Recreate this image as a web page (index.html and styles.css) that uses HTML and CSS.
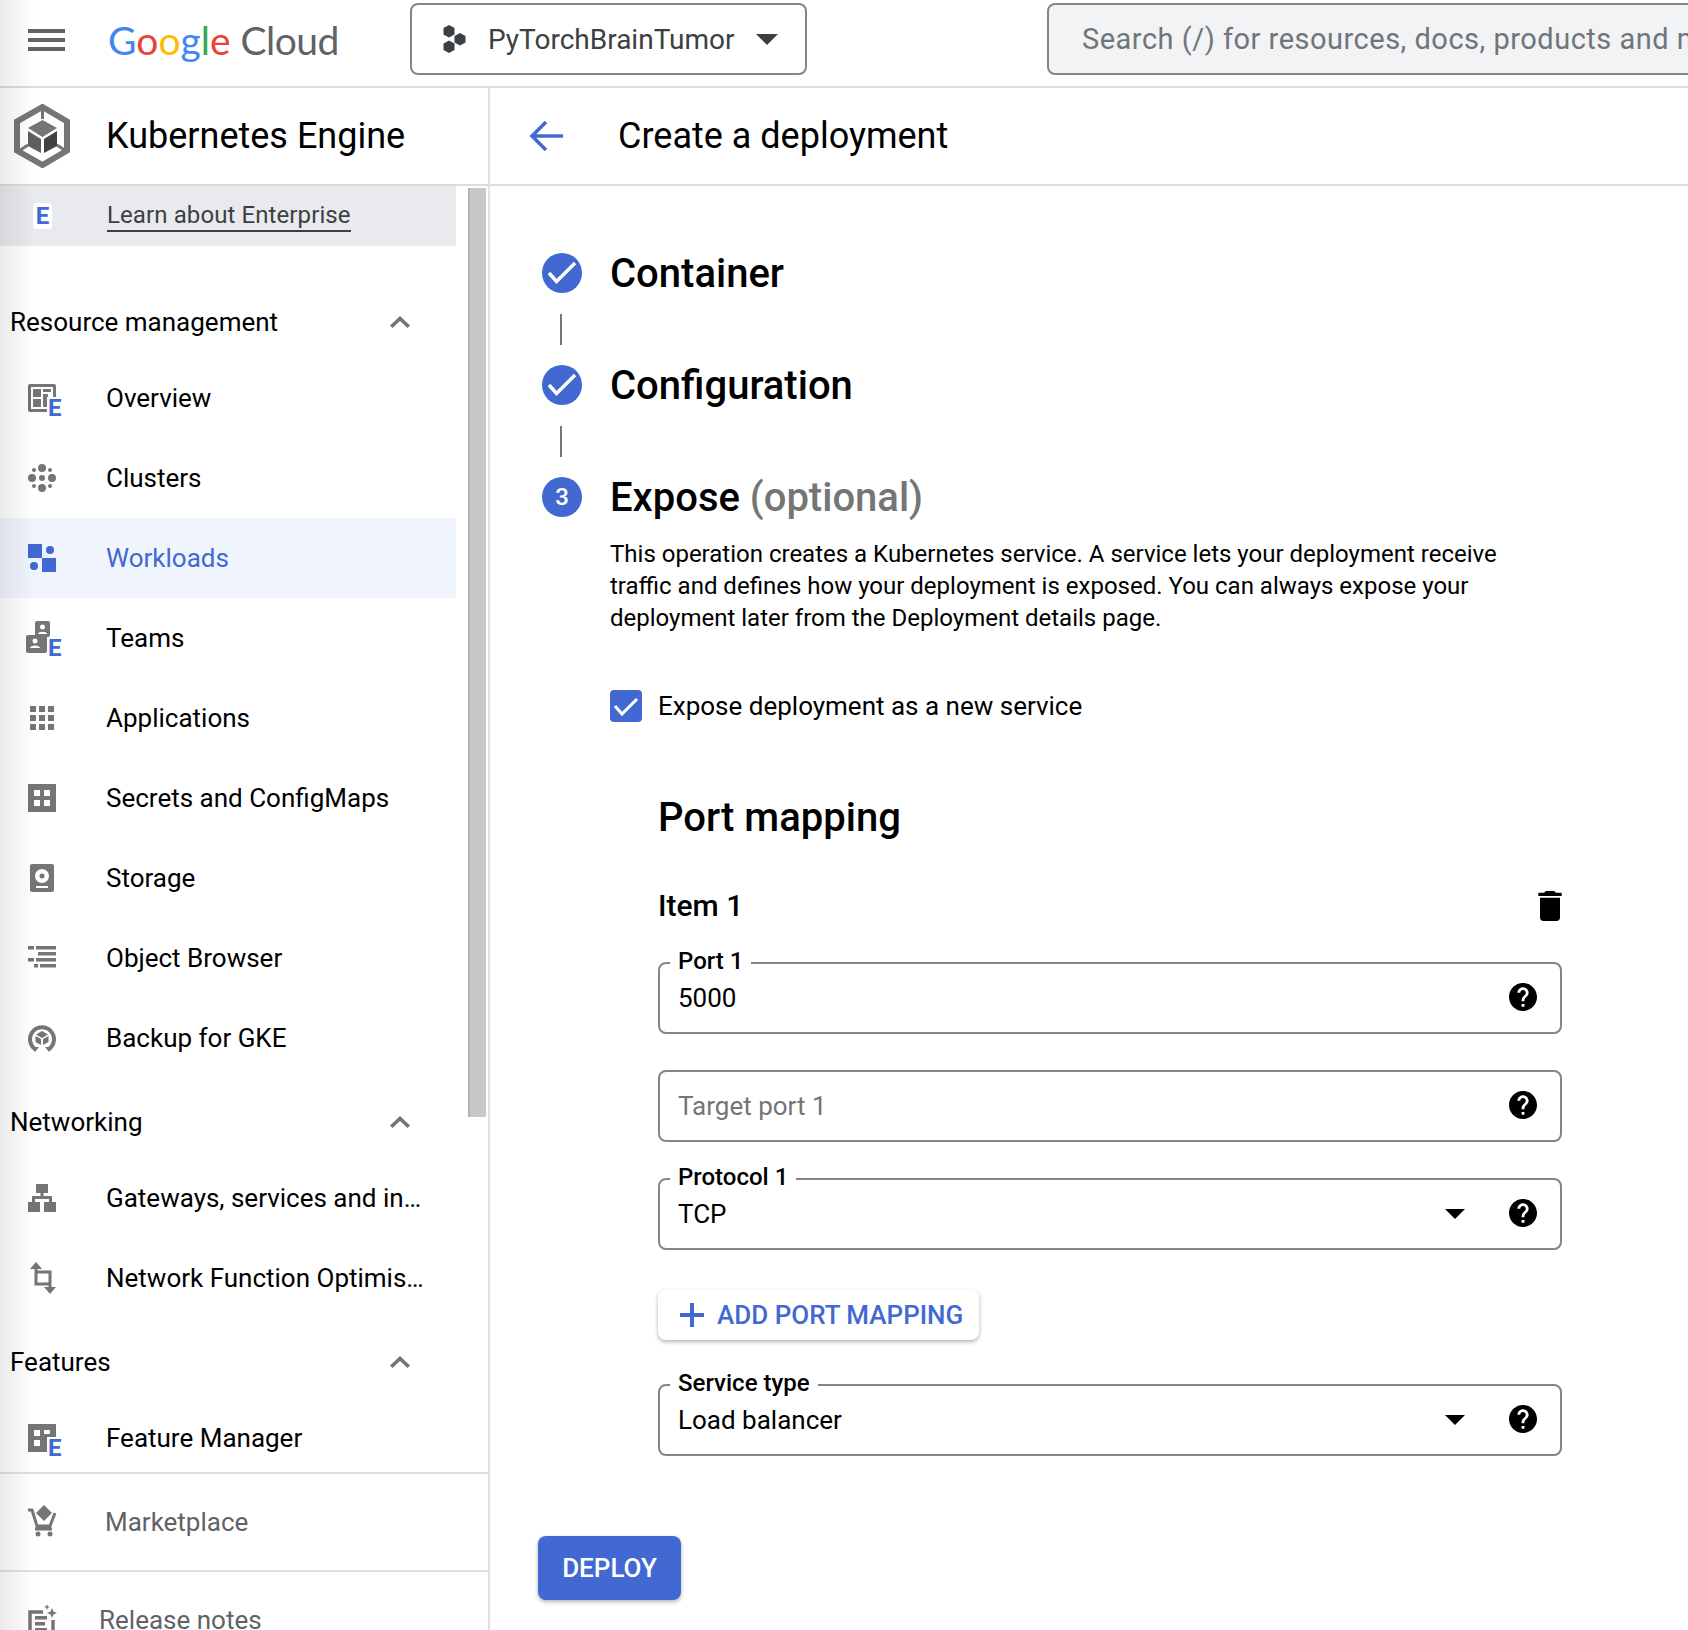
FILE: index.html
```html
<!DOCTYPE html>
<html lang="en">
<head>
    <meta charset="UTF-8">
    <meta name="viewport" content="width=device-width, initial-scale=1.0">
    <title>Create a deployment</title>
    <link rel="stylesheet" href="styles.css">
</head>
<body>

<!-- Top bar -->
<header class="topbar">
    <svg class="menu-icon" viewBox="0 0 37 22"><path d="M0 0h37v4H0zM0 9h37v4H0zM0 18h37v4H0z"/></svg>
    <div class="logo">
        <span class="g-blue">G</span><span class="g-red">o</span><span class="g-yellow">o</span><span class="g-blue">g</span><span class="g-green">l</span><span class="g-red">e</span>
        <span class="logo-cloud">Cloud</span>
    </div>
    <div class="project">
        <svg class="project-icon" viewBox="0 0 27 28"><path d="M8 0l5.500 3v6.500L8 12.500 2.500 9.500V3zM19 8l5.500 3v6.500L19 20.500l-5.500-3V11zM8 15.500l5.500 3V25L8 28l-5.500-3v-6.500z"/></svg>
        <span class="project-name">PyTorchBrainTumor</span>
        <span class="project-caret"></span>
    </div>
    <div class="search">Search (/) for resources, docs, products and more</div>
</header>

<div class="layout">
    <!-- Sidebar -->
    <aside class="sidebar">
        <div class="sidebar-title">
            <svg class="gke-logo" viewBox="0 0 56 64">
                <path d="M28.500 3L53 17.500V46.500L28.500 61 3 46.500V17.500z" fill="none" stroke="#757575" stroke-width="6"/>
                <path d="M28.500 4v11M5 47l9-6M52 47l-9-6" fill="none" stroke="#757575" stroke-width="3"/>
                <path d="M28.500 16L43 24l-14.500 9L14 24z" fill="#757575"/>
                <path d="M14 27l13 8v14l-13-7z" fill="#5f5f5f"/>
                <path d="M43 27l-13 8v14l13-7z" fill="#424242"/>
            </svg>
            <span>Kubernetes Engine</span>
        </div>

        <div class="nav-scroll">
            <nav class="nav-list">
                <a class="enterprise-row">
                    <span class="e-badge">E</span>
                    <span class="enterprise-link">Learn about Enterprise</span>
                </a>

                <div class="nav-head nav-head-first">
                    <span>Resource management</span>
                    <svg class="chevron" viewBox="0 0 20 12"><path d="M10 0l10 9.500-2.500 2.500L10 5 2.500 12 0 9.500z"/></svg>
                </div>
                <a class="nav-row">
                    <svg class="nav-icon" viewBox="0 0 28 28">
                        <rect width="28" height="28" rx="2"/>
                        <path fill="#fff" d="M3 3h22v22H3z"/>
                        <path d="M5 5h8v8H5zM15 5h8v3h-8zM5 15h8v8H5zM15 10h5v13h-5z"/>
                        <rect class="e-back" x="19" y="13" width="14" height="20"/>
                        <text class="e-mark" x="20" y="32">E</text>
                    </svg>
                    <span>Overview</span>
                </a>
                <a class="nav-row">
                    <svg class="nav-icon" viewBox="0 0 28 28">
                        <circle cx="14" cy="4" r="4"/><circle cx="14" cy="24" r="4"/><circle cx="4" cy="14" r="4"/><circle cx="24" cy="14" r="4"/>
                        <circle cx="14" cy="14" r="3"/><circle cx="6" cy="6" r="2"/><circle cx="22" cy="6" r="2"/><circle cx="6" cy="22" r="2"/><circle cx="22" cy="22" r="2"/>
                    </svg>
                    <span>Clusters</span>
                </a>
                <a class="nav-row nav-row-active">
                    <svg class="nav-icon" viewBox="0 0 28 28">
                        <path d="M0 0h14v14H0zM14 14h14v14H14z"/><circle cx="22" cy="6" r="4"/><circle cx="6" cy="22" r="4"/>
                    </svg>
                    <span>Workloads</span>
                </a>
                <a class="nav-row">
                    <svg class="nav-icon" viewBox="0 0 28 28">
                        <rect x="7" y="-3" width="15" height="16" rx="2"/>
                        <rect x="-2" y="11" width="21" height="18" rx="2"/>
                        <circle cx="14.500" cy="3" r="2.500" fill="#fff"/><path fill="#fff" d="M10 10c0-3 9-3 9 0z"/>
                        <circle cx="7" cy="17" r="2.500" fill="#fff"/><path fill="#fff" d="M2 24c0-3.500 10-3.500 10 0z"/>
                        <rect class="e-back" x="19" y="13" width="14" height="20"/>
                        <text class="e-mark" x="20" y="32">E</text>
                    </svg>
                    <span>Teams</span>
                </a>
                <a class="nav-row">
                    <svg class="nav-icon" viewBox="0 0 28 28">
                        <path d="M2 2h6v6H2zM11 2h6v6h-6zM20 2h6v6h-6zM2 11h6v6H2zM11 11h6v6h-6zM20 11h6v6h-6zM2 20h6v6H2zM11 20h6v6h-6zM20 20h6v6h-6z"/>
                    </svg>
                    <span>Applications</span>
                </a>
                <a class="nav-row">
                    <svg class="nav-icon" viewBox="0 0 28 28">
                        <path fill-rule="evenodd" d="M0 0h28v28H0zM6 6v6h6V6zM16 6v6h6V6zM6 16v6h6v-6zM16 16v6h6v-6z"/>
                    </svg>
                    <span>Secrets and ConfigMaps</span>
                </a>
                <a class="nav-row">
                    <svg class="nav-icon" viewBox="0 0 28 28">
                        <rect x="2" width="24" height="28" rx="2"/>
                        <circle cx="14" cy="12" r="7" fill="#fff"/><circle cx="14" cy="12" r="2.500"/>
                        <path fill="#fff" d="M8 22h12v2H8z"/>
                    </svg>
                    <span>Storage</span>
                </a>
                <a class="nav-row">
                    <svg class="nav-icon" viewBox="0 0 28 28">
                        <path d="M0 2h6v3.500H0zM8 2h20v3.500H8zM10 8h18v3.500H10zM0 14h6v3.500H0zM8 14h20v3.500H8zM6 20h4v3.500H6zM12 20h16v3.500H12z"/>
                    </svg>
                    <span>Object Browser</span>
                </a>
                <a class="nav-row">
                    <svg class="nav-icon" viewBox="0 0 28 28">
                        <path fill="none" stroke="#757575" stroke-width="4" d="M7 25A12 12 0 1 1 21 25"/>
                        <path d="M3 23h8l-4 5zM25 23h-8l4 5z"/>
                        <path d="M14 7l6 3.500-6 3.500-6-3.500zM7.500 12l5.500 3v6l-5.500-3zM20.500 12L15 15v6l5.500-3z"/>
                    </svg>
                    <span>Backup for GKE</span>
                </a>

                <div class="nav-head">
                    <span>Networking</span>
                    <svg class="chevron" viewBox="0 0 20 12"><path d="M10 0l10 9.500-2.500 2.500L10 5 2.500 12 0 9.500z"/></svg>
                </div>
                <a class="nav-row">
                    <svg class="nav-icon" viewBox="0 0 28 28">
                        <path d="M8 0h12v9h-4.500v3H24v6h4v10H16V18h5v-3H7v3h5v10H0V18h4v-6h8.500V9H8z"/>
                    </svg>
                    <span>Gateways, services and in…</span>
                </a>
                <a class="nav-row">
                    <svg class="nav-icon" viewBox="0 0 28 28">
                        <path fill="none" stroke="#757575" stroke-width="3" d="M8 3v17h14M8 8h14v15"/>
                        <path d="M8-2l6 7H2zM22 30l-6-7h12z"/>
                    </svg>
                    <span>Network Function Optimis…</span>
                </a>

                <div class="nav-head">
                    <span>Features</span>
                    <svg class="chevron" viewBox="0 0 20 12"><path d="M10 0l10 9.500-2.500 2.500L10 5 2.500 12 0 9.500z"/></svg>
                </div>
                <a class="nav-row">
                    <svg class="nav-icon" viewBox="0 0 28 28">
                        <path fill-rule="evenodd" d="M0 0h28v28H0zM6 6v6h6V6zM16 6v4h6V6zM6 16v6h6v-6z"/>
                        <rect class="e-back" x="19" y="13" width="14" height="20"/>
                        <text class="e-mark" x="20" y="32">E</text>
                    </svg>
                    <span>Feature Manager</span>
                </a>
            </nav>
            <div class="scrollbar"></div>
        </div>

        <a class="foot-row">
            <svg class="nav-icon" viewBox="0 0 28 28">
                <path d="M16-3l8 8-8 8-8-8z"/>
                <path fill="none" stroke="#757575" stroke-width="3" d="M0 2h4l5 16h13l5-13M7 21h17"/>
                <circle cx="10" cy="26" r="2.500"/><circle cx="22" cy="26" r="2.500"/>
            </svg>
            <span>Marketplace</span>
        </a>
        <a class="foot-row foot-row-last">
            <svg class="nav-icon" viewBox="0 0 28 28">
                <path fill="none" stroke="#757575" stroke-width="3.500" d="M15 6H2v24M25 14v16"/>
                <path d="M7 10h12v3.500H7zM7 16h10v3.500H7zM7 22h12v3.500H7z"/>
                <path d="M24 2l1.500 3.500L29 7l-3.500 1.500L24 12l-1.500-3.500L19 7l3.500-1.500zM19-2l.8 2.200L22 1l-2.200.8L19 4l-.8-2.200L16 1l2.200-.8z"/>
            </svg>
            <span>Release notes</span>
        </a>
    </aside>

    <!-- Main panel -->
    <main class="main">
        <div class="page-title">
            <svg class="back-icon" viewBox="0 0 34 30"><path fill="none" stroke="#4169d1" stroke-width="3.500" d="M34 15H3M17 1L3 15l14 14"/></svg>
            <h1>Create a deployment</h1>
        </div>

        <div class="content">
            <div class="step">
                <span class="step-dot"><svg viewBox="0 0 40 40"><path fill="none" stroke="#fff" stroke-width="3.500" d="M7 20l7.500 8.500L33 10"/></svg></span>
                <h2>Container</h2>
            </div>
            <div class="step-line"></div>
            <div class="step">
                <span class="step-dot"><svg viewBox="0 0 40 40"><path fill="none" stroke="#fff" stroke-width="3.500" d="M7 20l7.500 8.500L33 10"/></svg></span>
                <h2>Configuration</h2>
            </div>
            <div class="step-line"></div>
            <div class="step">
                <span class="step-dot">3</span>
                <h2>Expose <span class="optional">(optional)</span></h2>
            </div>

            <div class="step-body">
                <p class="description">
                    This operation creates a Kubernetes service. A service lets your deployment receive<br>
                    traffic and defines how your deployment is exposed. You can always expose your<br>
                    deployment later from the Deployment details page.
                </p>

                <label class="check-row">
                    <span class="checkbox"><svg viewBox="0 0 32 32"><path fill="none" stroke="#fff" stroke-width="3" d="M5 16l7 8L27 9"/></svg></span>
                    Expose deployment as a new service
                </label>

                <div class="port-form">
                    <h3>Port mapping</h3>
                    <div class="item-head">
                        <h4>Item 1</h4>
                        <svg class="trash" viewBox="5 3 14 18"><path d="M6 19c0 1.100.9 2 2 2h8c1.100 0 2-.9 2-2V7H6v12zM19 4h-3.500l-1-1h-5l-1 1H5v2h14V4z"/></svg>
                    </div>

                    <div class="field">
                        <span class="field-label">Port 1</span>
                        <span class="field-value">5000</span>
                        <svg class="help" viewBox="2 2 20 20"><path d="M12 2C6.480 2 2 6.480 2 12s4.480 10 10 10 10-4.480 10-10S17.520 2 12 2zm1 17h-2v-2h2v2zm2.070-7.750l-.9.920C13.450 12.900 13 13.500 13 15h-2v-.5c0-1.100.45-2.100 1.170-2.830l1.240-1.260c.37-.36.59-.86.59-1.410 0-1.100-.9-2-2-2s-2 .9-2 2H8c0-2.210 1.790-4 4-4s4 1.790 4 4c0 .88-.36 1.680-.93 2.250z"/></svg>
                    </div>
                    <div class="field">
                        <span class="field-value field-placeholder">Target port 1</span>
                        <svg class="help" viewBox="2 2 20 20"><path d="M12 2C6.480 2 2 6.480 2 12s4.480 10 10 10 10-4.480 10-10S17.520 2 12 2zm1 17h-2v-2h2v2zm2.070-7.750l-.9.920C13.450 12.900 13 13.500 13 15h-2v-.5c0-1.100.45-2.100 1.170-2.830l1.240-1.260c.37-.36.59-.86.59-1.410 0-1.100-.9-2-2-2s-2 .9-2 2H8c0-2.210 1.790-4 4-4s4 1.790 4 4c0 .88-.36 1.680-.93 2.250z"/></svg>
                    </div>
                    <div class="field">
                        <span class="field-label">Protocol 1</span>
                        <span class="field-value">TCP</span>
                        <span class="field-caret"></span>
                        <svg class="help" viewBox="2 2 20 20"><path d="M12 2C6.480 2 2 6.480 2 12s4.480 10 10 10 10-4.480 10-10S17.520 2 12 2zm1 17h-2v-2h2v2zm2.070-7.750l-.9.920C13.450 12.900 13 13.500 13 15h-2v-.5c0-1.100.45-2.100 1.170-2.830l1.240-1.260c.37-.36.59-.86.59-1.410 0-1.100-.9-2-2-2s-2 .9-2 2H8c0-2.210 1.790-4 4-4s4 1.790 4 4c0 .88-.36 1.680-.93 2.250z"/></svg>
                    </div>

                    <button class="add-btn">
                        <svg viewBox="0 0 24 24"><path d="M10 0h4v10h10v4H14v10h-4V14H0v-4h10z"/></svg>
                        ADD PORT MAPPING
                    </button>

                    <div class="field field-service">
                        <span class="field-label">Service type</span>
                        <span class="field-value">Load balancer</span>
                        <span class="field-caret"></span>
                        <svg class="help" viewBox="2 2 20 20"><path d="M12 2C6.480 2 2 6.480 2 12s4.480 10 10 10 10-4.480 10-10S17.520 2 12 2zm1 17h-2v-2h2v2zm2.070-7.750l-.9.920C13.450 12.900 13 13.500 13 15h-2v-.5c0-1.100.45-2.100 1.170-2.830l1.240-1.260c.37-.36.59-.86.59-1.410 0-1.100-.9-2-2-2s-2 .9-2 2H8c0-2.210 1.790-4 4-4s4 1.790 4 4c0 .88-.36 1.680-.93 2.250z"/></svg>
                    </div>
                </div>
            </div>

            <button class="deploy-btn">DEPLOY</button>
        </div>
    </main>
</div>

</body>
</html>
```

FILE: styles.css
```css
* {
    box-sizing: border-box;
}
html, body {
    height: 1630px;
    overflow: hidden;
}
body {
    margin: 0;
    font-family: Roboto, "Liberation Sans", sans-serif;
    font-size: 26px;
    color: #000;
    background: #fff;
    position: relative;
}
/* soft shadow down the left edge of the page */
body::before {
    content: "";
    position: absolute;
    left: 0;
    top: 0;
    bottom: 0;
    width: 36px;
    background: linear-gradient(90deg, rgba(0, 0, 0, 0.08), rgba(0, 0, 0, 0));
    z-index: 5;
}

/* Top bar */
.topbar {
    height: 88px;
    display: flex;
    align-items: center;
    border-bottom: 2px solid #dadce0;
    overflow: hidden;
}
.menu-icon {
    width: 37px;
    height: 22px;
    margin-left: 28px;
    margin-bottom: 6px;
    fill: #5f6368;
    flex: none;
}
.logo {
    width: 302px;
    margin-left: 43px;
    margin-bottom: 6px;
    font-family: Lato, Roboto, sans-serif;
    font-size: 39px;
    flex: none;
}
.g-blue { color: #4285f4; }
.g-red { color: #ea4335; }
.g-yellow { color: #fbbc04; }
.g-green { color: #34a853; }
.logo-cloud {
    color: #5f6368;
    letter-spacing: -0.5px;
}
.project {
    width: 397px;
    height: 72px;
    margin-bottom: 8px;
    padding-left: 29px;
    display: flex;
    align-items: center;
    border: 2px solid #80868b;
    border-radius: 8px;
    flex: none;
}
.project-icon {
    width: 27px;
    height: 28px;
    fill: #3c4043;
}
.project-name {
    margin-left: 20px;
    font-size: 28px;
    color: #3c4043;
}
.project-caret {
    margin-left: 21px;
    border-left: 11px solid transparent;
    border-right: 11px solid transparent;
    border-top: 11px solid #3c4043;
}
.search {
    width: 800px;
    height: 72px;
    margin-left: 240px;
    margin-bottom: 8px;
    padding-left: 33px;
    display: flex;
    align-items: center;
    flex: none;
    font-size: 29px;
    letter-spacing: 0.5px;
    color: #70757a;
    white-space: nowrap;
    background: #f1f3f4;
    border: 2px solid #80868b;
    border-radius: 8px;
}

.layout {
    display: flex;
    height: 1542px;
}

/* Sidebar */
.sidebar {
    width: 490px;
    flex: none;
    border-right: 2px solid #e0e0e0;
    display: flex;
    flex-direction: column;
}
.sidebar-title {
    height: 98px;
    flex: none;
    display: flex;
    align-items: center;
    border-bottom: 2px solid #dadce0;
    font-size: 36px;
}
.gke-logo {
    width: 56px;
    height: 64px;
    margin-left: 14px;
    margin-right: 36px;
}
.nav-scroll {
    height: 1288px;
    flex: none;
    display: flex;
    overflow: hidden;
    border-bottom: 2px solid #e0e0e0;
}
.nav-list {
    width: 456px;
    flex: none;
}
.scrollbar {
    width: 18px;
    height: 929px;
    margin: 2px 0 0 12px;
    background: #c8c8c8;
    border-left: 2px solid #b4b4b4;
    flex: none;
}
.enterprise-row {
    height: 60px;
    display: flex;
    align-items: center;
    background: #e8eaed;
    color: #3c4043;
}
.e-badge {
    width: 19px;
    height: 26px;
    margin-left: 33px;
    margin-right: 55px;
    display: flex;
    align-items: center;
    justify-content: center;
    background: #fff;
    border-radius: 3px;
    color: #4169d1;
    font-size: 24px;
    font-weight: 700;
}
.enterprise-link {
    border-bottom: 2px solid #3c4043;
    font-size: 24px;
    letter-spacing: 0.1px;
    line-height: 30px;
}
.nav-head {
    height: 72px;
    margin-top: 8px;
    padding: 0 46px 0 10px;
    display: flex;
    align-items: center;
    justify-content: space-between;
}
.nav-head-first {
    margin-top: 40px;
}
.chevron {
    width: 20px;
    height: 12px;
    fill: #757575;
}
.nav-row {
    height: 80px;
    display: flex;
    align-items: center;
}
.nav-row-active {
    background: #f0f4fd;
    color: #4169d1;
}
.nav-row-active .nav-icon {
    fill: #4169d1;
}
.nav-icon {
    width: 28px;
    height: 28px;
    margin-left: 28px;
    margin-right: 50px;
    fill: #757575;
    overflow: visible;
    flex: none;
}
.e-back {
    fill: #fff;
}
.e-mark {
    fill: #4169d1;
    font-family: Roboto, sans-serif;
    font-size: 24px;
    font-weight: 700;
}
.foot-row {
    height: 98px;
    flex: none;
    display: flex;
    align-items: center;
    color: #5f6368;
    border-bottom: 2px solid #e0e0e0;
}
.foot-row .nav-icon {
    margin-right: 49px;
}
.foot-row-last {
    height: 92px;
    padding-top: 4px;
    border-bottom: none;
}
.foot-row-last .nav-icon {
    margin-right: 43px;
}

/* Main panel */
.main {
    flex: 1;
    min-width: 0;
}
.page-title {
    height: 98px;
    padding-left: 39px;
    display: flex;
    align-items: center;
    border-bottom: 2px solid #dadce0;
}
.back-icon {
    width: 34px;
    height: 30px;
}
.page-title h1 {
    margin: 0 0 0 55px;
    font-size: 36px;
    font-weight: 400;
}
.content {
    padding: 67px 0 0 52px;
}
.step {
    height: 40px;
    display: flex;
    align-items: center;
}
.step-dot {
    width: 40px;
    height: 40px;
    display: flex;
    align-items: center;
    justify-content: center;
    background: #4169d1;
    border-radius: 50%;
    color: #fff;
    font-size: 24px;
    font-weight: 500;
    flex: none;
}
.step-dot svg {
    width: 40px;
    height: 40px;
}
.step h2 {
    margin: 2px 0 0 28px;
    font-size: 40px;
    font-weight: 500;
    line-height: 40px;
}
.optional {
    color: #757575;
}
.step-line {
    width: 2px;
    height: 31px;
    margin: 21px 0 20px 18px;
    background: #757575;
}
.step-body {
    margin-left: 68px;
}
.description {
    margin: 21px 0 0;
    font-size: 24px;
    line-height: 32px;
}
.check-row {
    height: 32px;
    margin-top: 56px;
    display: flex;
    align-items: center;
    gap: 16px;
}
.checkbox {
    width: 32px;
    height: 32px;
    background: #4169d1;
    border-radius: 4px;
    display: flex;
}
.port-form {
    width: 904px;
    margin-left: 48px;
}
.port-form h3 {
    height: 48px;
    margin: 72px 0 0;
    font-size: 40px;
    font-weight: 500;
    line-height: 48px;
}
.item-head {
    height: 40px;
    margin: 43px 0 37px;
    display: flex;
    align-items: center;
    justify-content: space-between;
}
.item-head h4 {
    margin: 0;
    font-size: 30px;
    font-weight: 500;
}
.trash {
    width: 24px;
    height: 30px;
    margin-top: 2px;
}
.field {
    height: 72px;
    margin-bottom: 36px;
    padding: 0 23px 0 18px;
    display: flex;
    align-items: center;
    position: relative;
    border: 2px solid #80868b;
    border-radius: 8px;
}
.field-label {
    position: absolute;
    left: 10px;
    top: -19px;
    padding: 0 8px;
    background: #fff;
    font-size: 24px;
    font-weight: 500;
    line-height: 32px;
}
.field-value {
    flex: 1;
}
.field-placeholder {
    color: #757575;
}
.field-caret {
    margin-right: 44px;
    border-left: 10px solid transparent;
    border-right: 10px solid transparent;
    border-top: 10px solid #000;
}
.help {
    width: 28px;
    height: 28px;
    margin-bottom: 2px;
}
.add-btn {
    width: 321px;
    height: 50px;
    margin-top: 40px;
    padding: 0 0 0 22px;
    display: flex;
    align-items: center;
    gap: 13px;
    background: #fff;
    border: none;
    border-radius: 8px;
    box-shadow: 0 2px 4px rgba(60, 64, 67, 0.35), 0 1px 4px rgba(60, 64, 67, 0.06);
    color: #4169d1;
    font-family: inherit;
    font-size: 26px;
    font-weight: 500;
}
.add-btn svg {
    width: 24px;
    height: 24px;
    fill: #4169d1;
}
.field-service {
    margin-top: 44px;
    margin-bottom: 0;
}
.deploy-btn {
    width: 143px;
    height: 64px;
    margin-top: 80px;
    margin-left: -4px;
    background: #4169d1;
    border: none;
    border-radius: 8px;
    box-shadow: 0 2px 4px rgba(60, 64, 67, 0.35), 0 1px 4px rgba(60, 64, 67, 0.06);
    color: #fff;
    font-family: inherit;
    font-size: 26px;
    font-weight: 500;
}
```
